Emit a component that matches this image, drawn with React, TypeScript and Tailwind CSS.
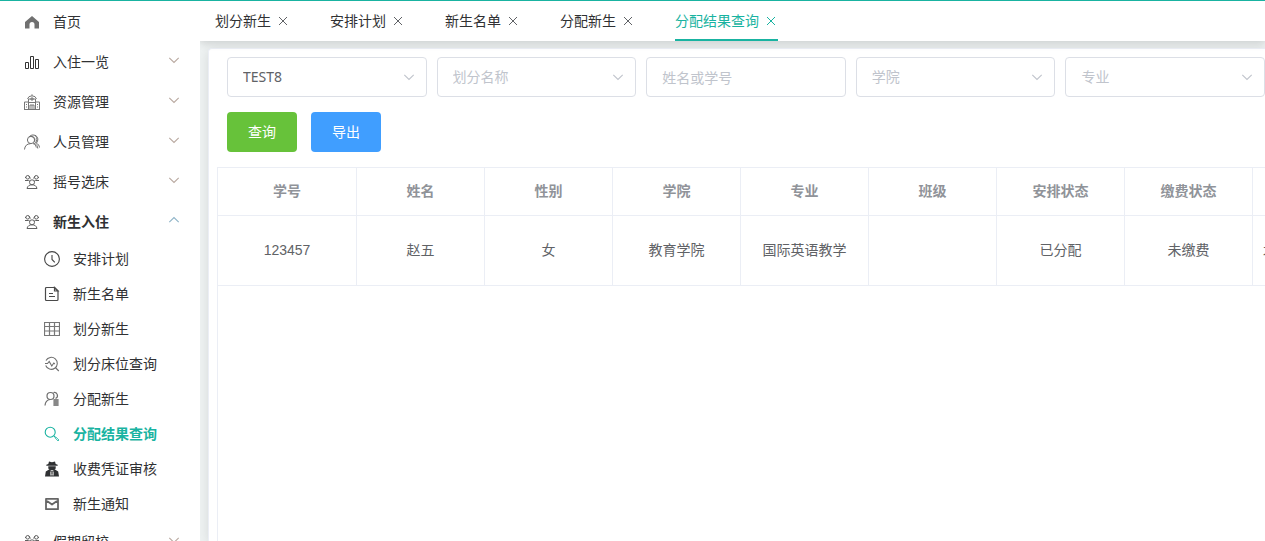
import type { ReactNode } from "react";

type IconName =
  | "home" | "bars" | "building" | "person" | "group" | "clock" | "doc"
  | "grid" | "analyze" | "assign" | "search" | "agent" | "mail";

const drawings: Record<IconName, ReactNode> = {
  home: <path d="M8 2 1 8v6.5h4.5v-4a2.5 2.5 0 0 1 5 0v4H15V8Z" fill="#707070" />,
  bars: (
    <g fill="none" stroke="#333">
      <path d="M1.5 8.5h3v6h-3zM6.5 2.5h3v12h-3zM11.5 5.5h3v9h-3z" />
    </g>
  ),
  building: (
    <g fill="none" stroke="#777">
      <path d="M.5 15.5V8h4M15.5 15.5V8h-4M0 15.5h16M4.5 15.5V5h7v10.5M3.5 5a4.6 4 0 0 1 9 0M8 .3v1.5M6 15v-4h4v4M8 11v4" />
      <path d="M7 4h2v2H7zM5 8.500h6M2.500 10v1M2.500 12.500v1M13.500 10v1M13.500 12.500v1" />
    </g>
  ),
  person: (
    <g fill="none" stroke="#6e6e6e">
      <circle cx="7" cy="6" r="3.600" />
      <path d="M.5 15.500C.8 11.800 3 9.700 6.500 9.700M5 3C7 .3 11.300.2 12.600 3.400c1 2.600-.6 5-2.200 6.200 2.200.6 3.200 2.500 3.400 4.900M7 2.500c3 0 4.800 2 3.400 5.200M10.800 1.200c3.600 1.400 3.800 5 1.500 8 2 .9 3 2.300 3.200 4.300M9 9.500c2.200.8 3 2.400 3.300 4" />
    </g>
  ),
  group: (
    <g fill="none" stroke="#606060">
      <circle cx="3.700" cy="3.300" r="1.800" />
      <circle cx="12.300" cy="3.300" r="1.800" />
      <path d="M1 6.500h3.500l1.500.8M15 6.500h-3.500l-1.500.8M1 3.500h1M14 3.500h1M5.200 2.200l1.200 2.300M10.800 2.200 9.600 4.500" />
      <circle cx="8" cy="8.300" r="2.500" />
      <path d="M3 14.500c.5-2.600 2.400-3.700 5-3.700s4.500 1.100 5 3.700Z" />
    </g>
  ),
  clock: (
    <g fill="none" stroke="#444" strokeWidth="1.100">
      <circle cx="8" cy="8" r="7.400" />
      <path d="M8 4v4.500l2.800 2.800" />
    </g>
  ),
  doc: (
    <g fill="none" stroke="#4a4a4a" strokeWidth="1.200">
      <path d="M2.500 1.500h8l3.500 3.500v8.500a1 1 0 0 1-1 1H2.500a1 1 0 0 1-1-1v-11a1 1 0 0 1 1-1Z" />
      <path d="M10.500 1.500V5H14ZM5 7.500h4M5 10.500h6" />
    </g>
  ),
  grid: <path d="M.5 1.500h15v13H.5zM.5 5.500h15M.5 10h15M5.500 1.500v13M10.500 1.500v13" fill="none" stroke="#777" strokeWidth="1.200" />,
  analyze: (
    <g fill="none" stroke="#6e6e6e" strokeWidth="1.100">
      <path d="M2 4.500a6 6 0 1 1-.3 5M1 7.500h2.500l1.700-2 2.600 4.500 2-3 1 1M11.800 12l3 3" />
    </g>
  ),
  assign: (
    <g fill="none" stroke="#6e6e6e" strokeWidth="1.200">
      <circle cx="6.500" cy="5" r="3.500" />
      <path d="M1 14.500c.3-3.600 2-5.500 5-6M9.500 1.500c4-1 5.500 4.500 2 6" />
      <path d="M10 8.500h4v6h-4z" fill="#888" stroke="#888" />
    </g>
  ),
  search: (
    <g fill="none" stroke="#19b3a1" strokeWidth="1.100">
      <circle cx="6.200" cy="6.200" r="5" />
      <path d="m10 10 1.500 1.500" />
      <path d="m11.200 12 .8-.8 3 2.800-1 1Z" strokeWidth="0.800" />
    </g>
  ),
  agent: (
    <g>
      <path d="M5 .4 8 1.200 11 .4l.7 2.700 2 .7v.9H2.300v-.9l2-.7ZM4.300 5.200h7.400v2.300L10 9.300H6L4.300 7.500ZM1 15.500l.8-5.100L5 8.500l3 2 3-2 3.200 1.900.8 5.100Z" fill="#2f3133" />
      <path d="M6 10.500h4v4H6z" fill="#a8a8a8" />
      <path d="M8 10v3" stroke="#555" />
    </g>
  ),
  mail: (
    <g fill="none" stroke="#666" strokeWidth="1.800" strokeLinejoin="round">
      <path d="M2 2.800h12v10.400H2zM3 5 8 8.500 13 5" />
    </g>
  ),
};

function Icon({ name }: { name: IconName }) {
  return <svg viewBox="0 0 16 16" className="size-4 shrink-0" aria-hidden="true">{drawings[name]}</svg>;
}

function Chevron({ up, className }: { up?: boolean; className: string }) {
  return (
    <svg viewBox="0 0 12 12" className={className} fill="none" stroke="currentColor" strokeWidth="1.100" aria-hidden="true">
      <path d={up ? "m1.300 8.200 4.700-4.700 4.700 4.700" : "m1.300 3.800 4.700 4.700 4.700-4.700"} />
    </svg>
  );
}

type Item = { label: string; icon: IconName; leaf?: boolean; children?: Item[] };

const menu: Item[] = [
  { label: "首页", icon: "home", leaf: true },
  { label: "入住一览", icon: "bars" },
  { label: "资源管理", icon: "building" },
  { label: "人员管理", icon: "person" },
  { label: "摇号选床", icon: "group" },
  {
    label: "新生入住",
    icon: "group",
    children: [
      { label: "安排计划", icon: "clock" },
      { label: "新生名单", icon: "doc" },
      { label: "划分新生", icon: "grid" },
      { label: "划分床位查询", icon: "analyze" },
      { label: "分配新生", icon: "assign" },
      { label: "分配结果查询", icon: "search" },
      { label: "收费凭证审核", icon: "agent" },
      { label: "新生通知", icon: "mail" },
    ],
  },
  { label: "假期留校", icon: "group" },
];

const current = "分配结果查询";
const tabs = ["划分新生", "安排计划", "新生名单", "分配新生", current];

const columns = ["学号", "姓名", "性别", "学院", "专业", "班级", "安排状态", "缴费状态", "床位信息"];
const rows = [["123457", "赵五", "女", "教育学院", "国际英语教学", "", "已分配", "未缴费", "北区1号楼1单元101室"]];

function Sidebar() {
  return (
    <nav className="relative z-10 w-50 shrink-0 overflow-hidden bg-white pt-px text-[#303133]">
      <ul>
        {menu.map((item) => (
          <li key={item.label}>
            <button
              type="button"
              aria-expanded={item.leaf ? undefined : Boolean(item.children)}
              className={`flex h-10 w-full items-center gap-[13px] pr-5 pl-6 text-left ${item.children ? "font-bold" : ""}`}
            >
              <Icon name={item.icon} />
              <span className="flex-1">{item.label}</span>
              {!item.leaf && (
                <span className="pb-1">
                  <Chevron up={Boolean(item.children)} className={`size-3 ${item.children ? "text-[#8fb4c8]" : "text-[#b9a9a0]"}`} />
                </span>
              )}
            </button>
            {item.children && (
              <ul>
                {item.children.map((child) => (
                  <li key={child.label}>
                    <a
                      href="#"
                      aria-current={child.label === current ? "page" : undefined}
                      className={`flex h-[35px] items-center gap-[13px] pb-0.5 pl-11 ${child.label === current ? "font-bold text-[#19b3a1]" : ""}`}
                    >
                      <Icon name={child.icon} />
                      <span>{child.label}</span>
                    </a>
                  </li>
                ))}
              </ul>
            )}
          </li>
        ))}
      </ul>
    </nav>
  );
}

function TabBar() {
  return (
    <div className="relative flex h-10 shrink-0 gap-10 bg-white pl-[15px] whitespace-nowrap text-[#303133] shadow-[0_2px_8px_rgba(0,0,0,0.15)]">
      {tabs.map((tab) => (
        <div
          key={tab}
          className={`flex shrink-0 items-center gap-[5px] border-b-2 pt-0.5 ${tab === current ? "border-[#19b3a1] text-[#19b3a1]" : "border-transparent"}`}
        >
          <a href="#">{tab}</a>
          <button type="button" aria-label={`关闭${tab}`} className={tab === current ? "" : "text-[#606266]"}>
            <svg viewBox="0 0 14 14" className="size-3.5" fill="none" stroke="currentColor" aria-hidden="true">
              <path d="m3 3 8 8m0-8-8 8" />
            </svg>
          </button>
        </div>
      ))}
    </div>
  );
}

const fieldStyle =
  "h-10 w-full appearance-none rounded border border-[#dcdfe6] bg-white px-[15px] font-['Noto_Sans','Noto_Sans_CJK_SC',sans-serif] outline-none placeholder:text-[#c0c4cc]";

function SelectField({ label, value }: { label: string; value?: string }) {
  return (
    <div className="relative">
      <select aria-label={label} className={`${fieldStyle} ${value ? "text-[#606266]" : "text-[#c0c4cc]"}`}>
        <option>{value ?? label}</option>
      </select>
      <Chevron className="pointer-events-none absolute top-3.5 right-3 size-3 text-[#c0c4cc]" />
    </div>
  );
}

function Filters() {
  return (
    <form className="pl-2.5" onSubmit={(e) => e.preventDefault()}>
      <div className="grid grid-cols-5 gap-2.5">
        <SelectField label="计划名称" value="TEST8" />
        <SelectField label="划分名称" />
        <input aria-label="姓名或学号" placeholder="姓名或学号" className={fieldStyle} />
        <SelectField label="学院" />
        <SelectField label="专业" />
      </div>
      <div className="flex gap-3.5 py-[15px] text-white">
        <button type="submit" className="h-10 w-[70px] rounded bg-[#67c23a]">查询</button>
        <button type="button" className="h-10 w-[70px] rounded bg-[#409eff]">导出</button>
      </div>
    </form>
  );
}

function ResultTable() {
  return (
    <div className="flex-1 overflow-hidden border-t border-l border-[#ebeef5]">
      <table className="w-max table-fixed border-separate border-spacing-0 text-center">
        <thead className="text-[#909399]">
          <tr>
            {columns.map((c) => (
              <th key={c} className="h-12 w-32 border-r border-b border-[#ebeef5] px-2.5 pb-0.5 font-bold first:w-[139px]">{c}</th>
            ))}
          </tr>
        </thead>
        <tbody className="text-[#606266]">
          {rows.map((row) => (
            <tr key={row[0]}>
              {row.map((cell, i) => (
                <td key={columns[i]} className="h-[70px] max-w-32 truncate border-r border-b border-[#ebeef5] px-2.5 pb-0.5">{cell}</td>
              ))}
            </tr>
          ))}
        </tbody>
      </table>
    </div>
  );
}

export default function App() {
  return (
    <div className="flex h-screen overflow-hidden border-t border-[#19b3a1] bg-white font-['Liberation_Sans','Noto_Sans_CJK_SC',sans-serif] text-sm">
      <Sidebar />
      <div className="flex min-w-0 flex-1 flex-col bg-[#eef2f2]">
        <TabBar />
        <main className="flex min-h-0 flex-1 flex-col overflow-hidden pt-[7px] pl-2">
          <section className="flex flex-1 flex-col rounded-tl border-t border-l border-[#ebeef5] bg-white pt-2 pl-2 shadow-[0_2px_12px_rgba(0,0,0,0.1)]">
            <Filters />
            <ResultTable />
          </section>
        </main>
      </div>
    </div>
  );
}
